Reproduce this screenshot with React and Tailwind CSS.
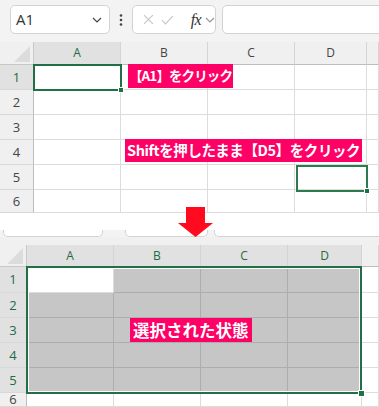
import React from "react";

function Chevron({ className, color = "#444" }) {
  return (
    <svg className={className} width="10" height="6" viewBox="0 0 10 6">
      <path d="M1 1 L5 5 L9 1" fill="none" stroke={color} strokeWidth="1.2" />
    </svg>
  );
}

function Toolbar() {
  return (
    <div className="h-[42px] bg-[#f3f3f3] flex items-start pt-[5px] pl-[10px] shrink-0">
      <div className="w-[100px] h-[29px] shrink-0 bg-white border border-[#d3d3d3] rounded-[5px] flex items-center justify-between pl-[5px] pr-[7px]">
        <span className="text-[15px] text-[#333] leading-none">A1</span>
        <Chevron />
      </div>
      <div className="w-[22px] h-[29px] shrink-0 flex items-center justify-center">
        <svg width="4" height="14" viewBox="0 0 4 14">
          <circle cx="2" cy="2.5" r="1.3" fill="#444" />
          <circle cx="2" cy="7" r="1.3" fill="#444" />
          <circle cx="2" cy="11.5" r="1.3" fill="#444" />
        </svg>
      </div>
      <div className="w-[84px] h-[29px] shrink-0 bg-white border border-[#d3d3d3] rounded-[5px] flex items-center pl-[10px]">
        <svg width="11" height="11" viewBox="0 0 11 11">
          <path d="M1 1 L10 10 M10 1 L1 10" stroke="#c4c4c4" strokeWidth="1.1" />
        </svg>
        <svg className="ml-[7px]" width="13" height="10" viewBox="0 0 13 10">
          <path d="M1 5 L4.5 9 L12 1" fill="none" stroke="#c4c4c4" strokeWidth="1.1" />
        </svg>
        <span className="ml-[17px] font-['Liberation_Serif',serif] italic text-[16px] leading-none text-[#333] tracking-[-0.5px]">fx</span>
        <Chevron className="ml-[4px]" color="#999" />
      </div>
      <div className="ml-[6px] w-[200px] h-[29px] shrink-0 bg-white border border-[#d3d3d3] rounded-[5px]" />
    </div>
  );
}

function Corner() {
  return (
    <div className="bg-[#f0f0f0] border-r border-b border-[#c8c8c8] flex items-end justify-end pr-[3px] pb-[2px]">
      <svg width="16" height="16" viewBox="0 0 16 16">
        <path d="M16 0 L16 16 L0 16 Z" fill="#dcdcdc" />
      </svg>
    </div>
  );
}

function ColHeader({ label, hi }) {
  return (
    <div
      className={
        "border-r border-b border-r-[#d4d4d4] border-b-[#bdbdbd] flex items-center justify-center text-[12px] leading-none " +
        (hi ? "bg-[#e1e1e1] text-[#1f6b45]" : "bg-[#f0f0f0] text-[#444]")
      }
    >
      {label}
    </div>
  );
}

function RowHeader({ label, hi }) {
  return (
    <div
      className={
        "border-r border-b border-r-[#bdbdbd] border-b-[#d8d8d8] flex items-center justify-center text-[13px] leading-none " +
        (hi ? "bg-[#e1e1e1] text-[#1f6b45]" : "bg-[#f0f0f0] text-[#444]")
      }
    >
      {label}
    </div>
  );
}

function Cell({ sel }) {
  return (
    <div
      className={
        "border-r border-b " +
        (sel ? "bg-[#c6c6c6] border-[#adadad]" : "bg-white border-[#dcdcdc]")
      }
    />
  );
}

const COLS = ["A", "B", "C", "D", ""];
const ROWS = ["1", "2", "3", "4", "5", "6"];

function TopSheet() {
  return (
    <div className="relative h-[171px] shrink-0">
      <div className="grid h-full grid-cols-[34px_87px_87px_87px_72px_1fr] grid-rows-[23px_25px_25px_25px_25px_25px_23px]">
        <Corner />
        {COLS.map((c, i) => (
          <ColHeader key={"c" + i} label={c} hi={c === "A"} />
        ))}
        {ROWS.map((r) => (
          <React.Fragment key={r}>
            <RowHeader label={r} hi={r === "1"} />
            {COLS.map((c, i) => (
              <Cell key={r + i} />
            ))}
          </React.Fragment>
        ))}
      </div>
      <div className="absolute left-[33px] top-[22px] w-[89px] h-[27px] border-2 border-[#1f7145]">
        <div className="absolute right-[-4px] bottom-[-4px] w-[6px] h-[6px] bg-[#1f7145] border border-white" />
      </div>
      <div className="absolute left-[296px] top-[123px] w-[72px] h-[27px] border-2 border-[#2e7a4f]">
        <div className="absolute right-[-4px] bottom-[-4px] w-[6px] h-[6px] bg-[#1f7145] border border-white" />
      </div>
    </div>
  );
}

function Strip() {
  return (
    <div className="h-[15px] shrink-0 bg-white flex flex-col">
      <div className="h-[7px] flex bg-[#f3f3f3]">
        <div className="ml-[3px] w-[100px] h-[7px] bg-white border border-t-0 border-[#d3d3d3] rounded-b-[5px]" />
        <div className="ml-[22px] w-[83px] h-[7px] bg-white border border-t-0 border-[#d3d3d3] rounded-b-[5px]" />
        <div className="ml-[6px] flex-1 h-[7px] bg-white border border-t-0 border-r-0 border-[#d3d3d3] rounded-bl-[5px]" />
      </div>
      <div className="h-[8px] bg-[#f0f0f0]" />
    </div>
  );
}

function BottomSheet() {
  return (
    <div className="relative h-[162px] shrink-0">
      <div className="grid h-full grid-cols-[27px_87px_87px_87px_74px_1fr] grid-rows-[22px_26px_25px_25px_25px_25px_14px]">
        <Corner />
        {COLS.map((c, i) => (
          <ColHeader key={"c" + i} label={c} hi={c !== ""} />
        ))}
        {ROWS.map((r, ri) => (
          <React.Fragment key={r}>
            <RowHeader label={r} hi={r !== "6"} />
            {COLS.map((c, ci) => (
              <Cell key={r + ci} sel={ri < 5 && ci < 4 && !(ri === 0 && ci === 0)} />
            ))}
          </React.Fragment>
        ))}
      </div>
      <div className="absolute left-[26px] top-[21px] w-[336px] h-[128px] border-2 border-[#1f7145] shadow-[inset_0_0_0_1px_#ffffff]">
        <div className="absolute right-[-5px] bottom-[-5px] w-[7px] h-[7px] bg-[#1f7145] border border-white" />
      </div>
    </div>
  );
}

function Label({ className, children }) {
  return (
    <div
      className={
        "absolute bg-[#fe0066] text-white font-['Noto_Sans_CJK_JP',sans-serif] font-bold leading-none flex items-center whitespace-nowrap " +
        className
      }
    >
      {children}
    </div>
  );
}

export default function App() {
  return (
    <div className="relative w-[379px] h-[407px] overflow-hidden bg-white font-['Open_Sans','Noto_Sans',sans-serif] flex flex-col">
      <Toolbar />
      <TopSheet />
      <div className="h-[17px] shrink-0 bg-white" />
      <Strip />
      <BottomSheet />

      <Label className="left-[128px] top-[64px] h-[24px] px-[1px] text-[13.5px] tracking-[-0.9px]">【A1】をクリック</Label>
      <Label className="left-[125px] top-[139px] h-[23px] px-[2px] text-[14.5px] tracking-[-0.4px]">Shiftを押したまま【D5】をクリック</Label>
      <Label className="left-[130px] top-[318px] h-[24px] px-[3px] text-[16.5px] tracking-[0px]">選択された状態</Label>

      <svg className="absolute left-[178px] top-[207px]" width="36" height="30" viewBox="0 0 36 30">
        <path d="M8 0 L27 0 L27 16 L35 16 L17.5 30 L0 16 L8 16 Z" fill="#ff0a1e" />
      </svg>
    </div>
  );
}
